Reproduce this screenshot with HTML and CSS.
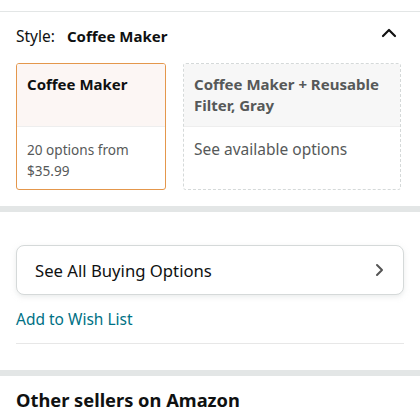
FILE: index.html
```html
<!DOCTYPE html>
<html lang="en">
<head>
    <meta charset="UTF-8">
    <meta name="viewport" content="width=device-width, initial-scale=1.0">
    <title>Style options</title>
    <link rel="stylesheet" href="styles.css">
</head>
<body>
    <div class="top-rule"></div>

    <div class="style-section">
        <div class="style-header">
            <span class="style-label">Style:</span>
            <span class="style-value">Coffee Maker</span>
            <svg class="chevron-up" width="16" height="10" viewBox="0 0 16 10">
                <path d="M2 8 L8 2 L14 8" fill="none" stroke="#111" stroke-width="2.2" stroke-linecap="round" stroke-linejoin="round"/>
            </svg>
        </div>

        <div class="swatches">
            <div class="swatch selected">
                <div class="swatch-title">Coffee Maker</div>
                <div class="swatch-body">20 options from<br>$35.99</div>
            </div>
            <div class="swatch unavailable">
                <div class="swatch-title">Coffee Maker + Reusable Filter, Gray</div>
                <div class="swatch-body">See available options</div>
            </div>
        </div>
    </div>

    <div class="band"></div>

    <div class="buy-section">
        <button class="options-button">
            <span>See All Buying Options</span>
            <svg width="10" height="14" viewBox="0 0 10 14">
                <path d="M2 2 L7 7 L2 12" fill="none" stroke="#555" stroke-width="2" stroke-linecap="round" stroke-linejoin="round"/>
            </svg>
        </button>
        <a class="wish-link" href="#">Add to Wish List</a>
        <div class="section-rule"></div>
    </div>

    <div class="band"></div>

    <h2 class="sellers-title">Other sellers on Amazon</h2>
</body>
</html>
```

FILE: styles.css
```css
body {
    margin: 0;
    font-family: "Noto Sans", Arial, sans-serif;
    color: #0f1111;
    background-color: #ffffff;
    width: 420px;
    overflow: hidden;
}

.top-rule {
    height: 11px;
    border-bottom: 1px solid #e3e6e6;
}

.style-section {
    padding: 0 16px 16px;
}

.style-header {
    display: flex;
    align-items: center;
    height: 48px;
    font-size: 15.5px;
}

.style-label {
    margin-right: 12px;
}

.style-value {
    font-weight: 700;
    font-size: 15px;
}

.chevron-up {
    margin-left: auto;
    margin-right: 7px;
    margin-top: -6px;
}

.swatches {
    display: flex;
    gap: 17px;
    margin-top: 3px;
}

.swatch {
    display: flex;
    flex-direction: column;
    height: 127px;
    border-radius: 3px;
    box-sizing: border-box;
    overflow: hidden;
}

.swatch.selected {
    width: 150px;
    border: 1px solid #e4974c;
}

.swatch.unavailable {
    width: 218px;
    border: 1px dashed #d5d9d9;
}

.swatch-title {
    height: 63px;
    box-sizing: border-box;
    padding: 10px 10px 0;
    font-size: 15px;
    font-weight: 700;
    line-height: 21px;
    border-bottom: 1px solid #eeeeee;
}

.selected .swatch-title {
    background-color: #fcf6f4;
}

.unavailable .swatch-title {
    background-color: #f7f7f7;
    color: #565959;
}

.swatch-body {
    padding: 12px 10px 0;
    font-size: 13.6px;
    line-height: 21px;
    color: #565959;
}

.unavailable .swatch-body {
    font-size: 15.5px;
}

.band {
    height: 6px;
    background-color: #e3e6e6;
}

.buy-section {
    padding: 33px 16px 0;
    margin-bottom: 26px;
}

.options-button {
    display: flex;
    align-items: center;
    justify-content: space-between;
    width: 100%;
    height: 50px;
    padding: 0 18px 0 18px;
    background-color: #ffffff;
    border: 1px solid #d5d9d9;
    border-radius: 8px;
    box-shadow: 0 2px 5px rgba(213, 217, 217, 0.5);
    font-family: inherit;
    font-size: 16.7px;
    color: #0f1111;
}

.wish-link {
    display: block;
    margin-top: 13px;
    font-size: 15.5px;
    line-height: 22px;
    color: #007185;
    text-decoration: none;
}

.section-rule {
    margin-top: 13px;
    border-top: 1px solid #e7e7e7;
}

.sellers-title {
    margin: 11px 16px 0;
    font-size: 18.3px;
    font-weight: 700;
}
```
